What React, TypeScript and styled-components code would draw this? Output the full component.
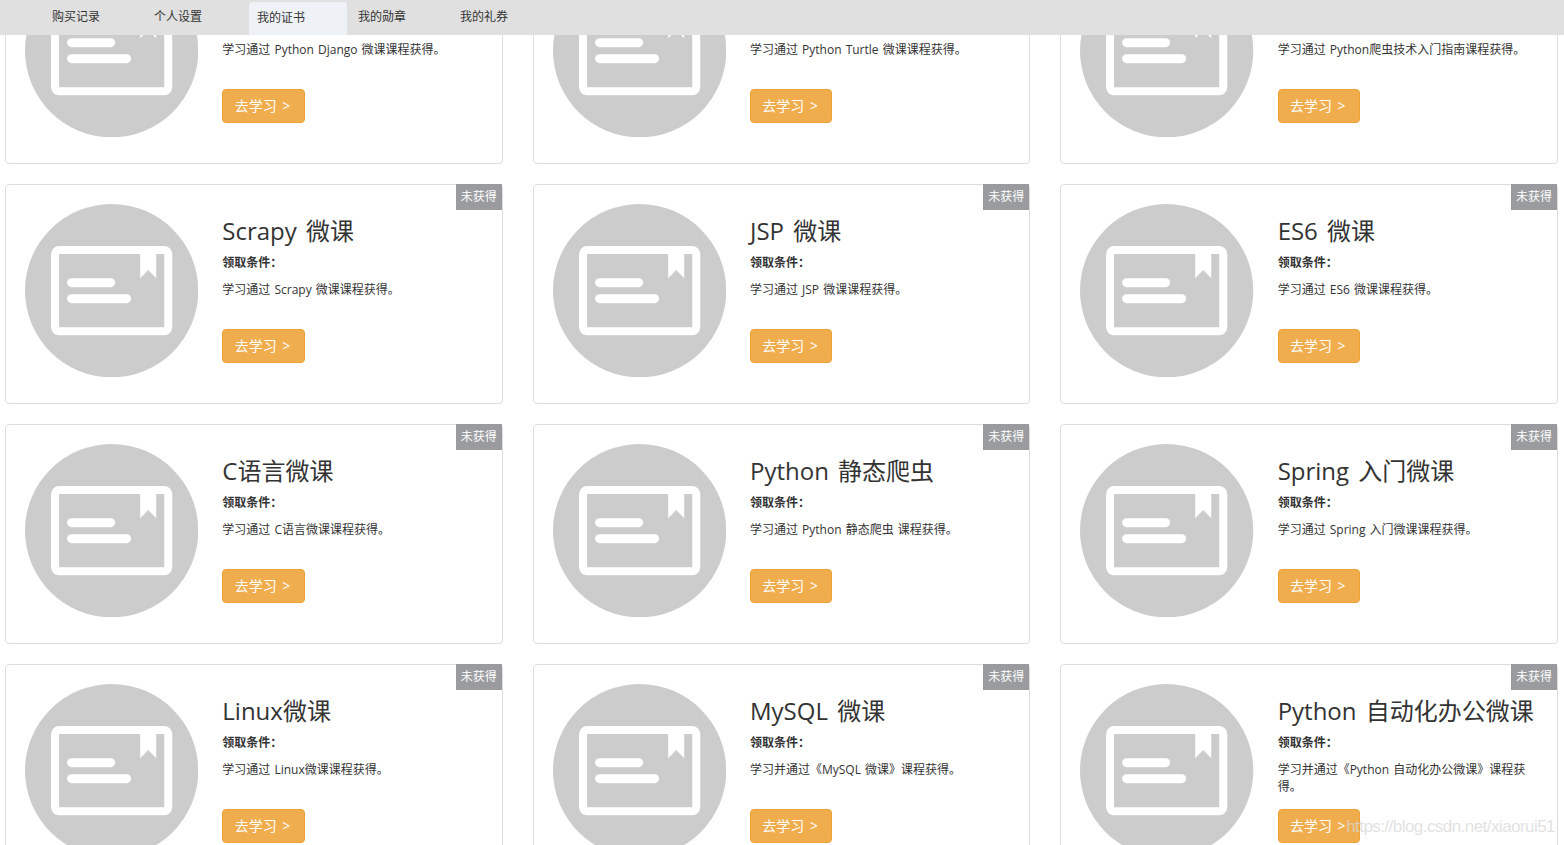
import styled, { createGlobalStyle } from 'styled-components';

const GlobalStyle = createGlobalStyle`
  html, body {
    margin: 0;
    padding: 0;
    background: #fff;
  }
  body {
    font-family: "Open Sans", "Noto Sans CJK SC", sans-serif;
    font-size: 12px;
    color: #333;
  }
`;

// ========================
// Page + tab bar
// ========================

const Page = styled.div`
  position: relative;
  height: 845px;
  overflow: hidden;
`;

const TabBar = styled.nav`
  position: absolute;
  top: 0;
  left: 0;
  right: 0;
  z-index: 2;
  height: 35px;
  padding-left: 44px;
  display: flex;
  gap: 4px;
  background: #e0e0e0;
`;

const Tab = styled.a<{ $active?: boolean }>`
  box-sizing: border-box;
  width: 98px;
  height: 33px;
  margin-top: 2px;
  margin-left: ${({ $active }) => ($active ? '1px' : '0')};
  margin-right: ${({ $active }) => ($active ? '-1px' : '0')};
  padding-left: 8px;
  border-radius: 3px 3px 0 0;
  font-size: 12px;
  line-height: ${({ $active }) => ($active ? '31px' : '29px')};
  color: #333;
  background: ${({ $active }) => ($active ? '#eef1f6' : 'transparent')};
`;

// ========================
// Certificate cards
// ========================

const CardGrid = styled.div`
  margin-top: -56px;
  padding: 0 6px 0 5px;
  display: grid;
  grid-template-columns: repeat(3, minmax(0, 1fr));
  column-gap: 30px;
  row-gap: 20px;
`;

const Card = styled.div`
  position: relative;
  box-sizing: border-box;
  height: 220px;
  padding: 19px 19px 0 19px;
  display: flex;
  gap: 24px;
  background: #fff;
  border: 1px solid #ddd;
  border-radius: 4px;
`;

const Badge = styled.span`
  position: absolute;
  top: -1px;
  right: 0;
  width: 46px;
  height: 26px;
  font-size: 12px;
  line-height: 25px;
  text-align: center;
  color: #fff;
  background: #999b9e;
`;

const Emblem = styled.svg`
  flex-shrink: 0;
  width: 173.3px;
  height: 173.3px;
`;

const CardBody = styled.div`
  flex: 1;
  min-width: 0;
  padding: 9px 5px 0 0;
`;

const Title = styled.h3`
  margin: 0 0 5px;
  font-size: 24px;
  font-weight: 400;
  line-height: 36px;
  white-space: nowrap;
  word-spacing: 3px;
`;

const Label = styled.p`
  margin: 0 0 10px;
  font-size: 12px;
  font-weight: 700;
  line-height: 17px;
`;

const Description = styled.p`
  height: 48px;
  margin: 0;
  font-size: 12px;
  line-height: 17px;
  word-spacing: 1px;
`;

const StudyButton = styled.a`
  box-sizing: border-box;
  display: inline-block;
  width: 82.4px;
  height: 34px;
  padding-right: 2px;
  border: 1px solid #eea236;
  border-radius: 4px;
  font-size: 14px;
  line-height: 32px;
  text-align: center;
  word-spacing: 2px;
  color: #fff;
  background: #f0ad4e;
`;

const Watermark = styled.span`
  position: absolute;
  z-index: 3;
  right: 9px;
  bottom: 8px;
  font-family: "Liberation Sans", Arial, sans-serif;
  font-size: 17px;
  letter-spacing: -0.55px;
  line-height: 20px;
  color: rgba(215, 215, 215, 0.75);
`;

const CertificateEmblem = () => (
  <Emblem viewBox="0 0 173 173">
    <circle cx="86.5" cy="86.5" r="86.5" fill="#ccc" />
    <rect x="30" y="46" width="113" height="81" rx="4" fill="none" stroke="#fff" strokeWidth="8" />
    <path d="M115 50h16v24l-8-8-8 8z" fill="#fff" />
    <rect x="42" y="74" width="48" height="9" rx="4.5" fill="#fff" />
    <rect x="42" y="90" width="64" height="9" rx="4.5" fill="#fff" />
  </Emblem>
);

const certificates = [
  { title: 'Python Django 微课', text: '学习通过 Python Django 微课课程获得。' },
  { title: 'Python Turtle 微课', text: '学习通过 Python Turtle 微课课程获得。' },
  { title: 'Python爬虫技术入门指南', text: '学习通过 Python爬虫技术入门指南课程获得。' },
  { title: 'Scrapy 微课', text: '学习通过 Scrapy 微课课程获得。' },
  { title: 'JSP 微课', text: '学习通过 JSP 微课课程获得。' },
  { title: 'ES6 微课', text: '学习通过 ES6 微课课程获得。' },
  { title: 'C语言微课', text: '学习通过 C语言微课课程获得。' },
  { title: 'Python 静态爬虫', text: '学习通过 Python 静态爬虫 课程获得。' },
  { title: 'Spring 入门微课', text: '学习通过 Spring 入门微课课程获得。' },
  { title: 'Linux微课', text: '学习通过 Linux微课课程获得。' },
  { title: 'MySQL 微课', text: '学习并通过《MySQL 微课》课程获得。' },
  { title: 'Python 自动化办公微课', text: '学习并通过《Python 自动化办公微课》课程获得。' },
];

const tabs = ['购买记录', '个人设置', '我的证书', '我的勋章', '我的礼券'];

const App = () => (
  <Page>
    <GlobalStyle />
    <TabBar>
      {tabs.map((tab) => (
        <Tab key={tab} $active={tab === '我的证书'}>
          {tab}
        </Tab>
      ))}
    </TabBar>
    <CardGrid>
      {certificates.map((cert) => (
        <Card key={cert.title}>
          <Badge>未获得</Badge>
          <CertificateEmblem />
          <CardBody>
            <Title>{cert.title}</Title>
            <Label>领取条件：</Label>
            <Description>{cert.text}</Description>
            <StudyButton>去学习 &gt;</StudyButton>
          </CardBody>
        </Card>
      ))}
    </CardGrid>
    <Watermark>https://blog.csdn.net/xiaorui51</Watermark>
  </Page>
);

export default App;
